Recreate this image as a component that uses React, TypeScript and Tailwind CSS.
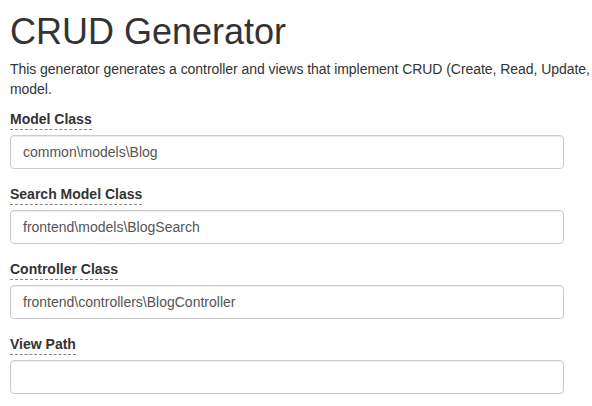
import React from 'react';

const fields = [
  { label: 'Model Class', value: 'common\\models\\Blog' },
  { label: 'Search Model Class', value: 'frontend\\models\\BlogSearch' },
  { label: 'Controller Class', value: 'frontend\\controllers\\BlogController' },
  { label: 'View Path', value: '' },
];

const App = () => {
  return (
    <div className="h-[406px] w-[592px] overflow-hidden bg-white pl-[10px] font-['Liberation_Sans',Arial,sans-serif] text-[14px] leading-[20px] text-[#333]">
      <h1 className="mt-[12px] mb-[7px] text-[36px] leading-[40px] font-medium whitespace-nowrap">
        CRUD Generator
      </h1>
      <p className="mb-[10px] whitespace-nowrap tracking-[-0.05px]">
        This generator generates a controller and views that implement CRUD (Create, Read, Update, Delete) operations for the specified data
        <br />
        model.
      </p>
      {fields.map((f) => (
        <div key={f.label} className="mb-[15px]">
          <label className="mb-[5px] inline-block border-b border-dashed border-[#888] font-bold">
            {f.label}
          </label>
          <input
            readOnly
            value={f.value}
            className="block h-[34px] w-[554px] rounded-[4px] border border-[#ccc] bg-white px-[12px] py-[6px] text-[14px] text-[#555] shadow-[inset_0_1px_1px_rgba(0,0,0,0.075)] outline-none"
          />
        </div>
      ))}
    </div>
  );
};

export default App;
